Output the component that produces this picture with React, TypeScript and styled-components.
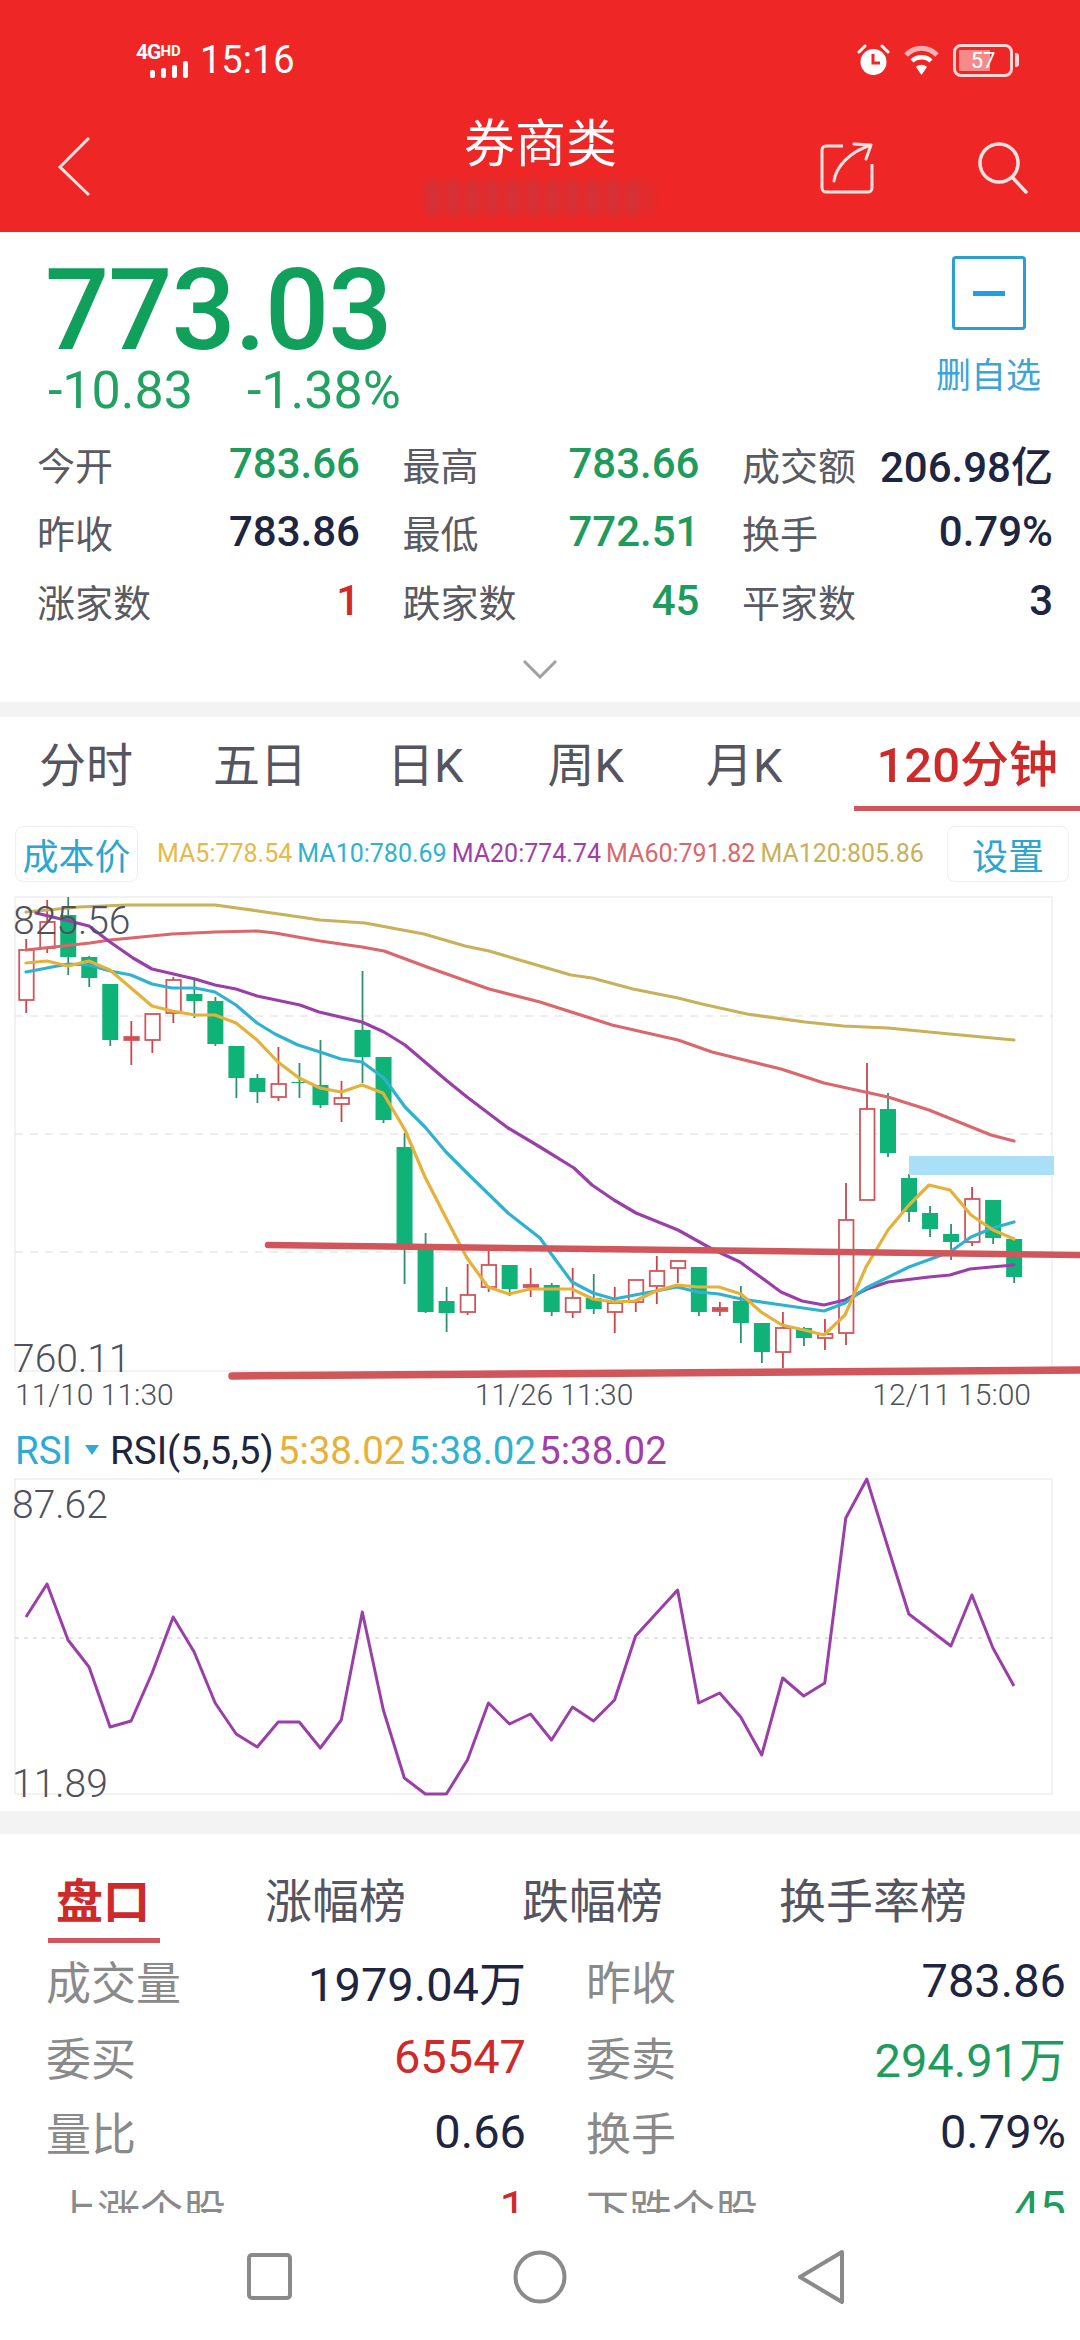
import React from 'react'
import styled, { createGlobalStyle } from 'styled-components'

const FONT = `Roboto, "Noto Sans CJK SC", sans-serif`
const RED = '#cf2a2a'
const GREEN = '#1d9c5e'
const NAVY = '#1e2540'
const SCRIBBLE = '#d1565b'

const GlobalStyle = createGlobalStyle`
  html, body {
    margin: 0;
    padding: 0;
    background: #fff;
  }
  * {
    box-sizing: border-box;
  }
`

const Page = styled.div`
  width: 1080px;
  height: 2340px;
  overflow: hidden;
  background: #fff;
  font-family: ${FONT};
  display: flex;
  flex-direction: column;
`

const Header = styled.header`
  position: relative;
  height: 232px;
  flex: none;
  background: #ee2626;
  color: #fff;
`

const StatusBar = styled.div`
  height: 34px;
  padding: 0 61px 0 136px;
  position: relative;
  top: 43px;
  display: flex;
  align-items: center;
`

const SignalBlock = styled.div`
  width: 60px;
  display: flex;
  flex-direction: column;
  align-items: flex-start;
  gap: 1px;

  svg {
    margin-left: 14px;
  }
`

const NetworkType = styled.span`
  font-size: 21px;
  line-height: 16px;
  font-weight: 700;
  letter-spacing: -1px;
  white-space: nowrap;

  small {
    font-size: 15px;
    vertical-align: 3px;
    letter-spacing: 0;
  }
`

const Clock = styled.span`
  font-size: 38px;
  line-height: 34px;
  margin-left: 4px;
`

const StatusIcons = styled.div`
  margin-left: auto;
  display: flex;
  align-items: center;
  gap: 14px;
`

const Battery = styled.div`
  position: relative;
  width: 60px;
  height: 33px;
  border: 3px solid #f9d5d5;
  border-radius: 8px;
  overflow: hidden;
  font-size: 22px;
  line-height: 27px;
  text-align: center;
  color: #fff;

  &::before {
    content: '';
    position: absolute;
    left: 3px;
    top: 3px;
    bottom: 3px;
    width: 31px;
    background: #f58a8a;
  }

  span {
    position: relative;
  }
`

const BatteryCap = styled.i`
  width: 4px;
  height: 14px;
  margin-left: -12px;
  background: #f9d5d5;
  border-radius: 0 3px 3px 0;
`

const NavRow = styled.div`
  position: absolute;
  top: 120px;
  left: 0;
  right: 0;
  padding: 0 50px 0 58px;
  display: grid;
  grid-template-columns: 1fr auto 1fr;
`

const BackIcon = styled.svg`
  margin-top: 17px;
`

const Title = styled.h1`
  margin: 1px 0 0 -7px;
  font-size: 51px;
  line-height: 48px;
  font-weight: 400;
`

const NavActions = styled.div`
  margin-top: 22px;
  display: flex;
  justify-content: flex-end;
  gap: 104px;
`

const Smudge = styled.div`
  position: absolute;
  left: 427px;
  top: 180px;
  width: 224px;
  height: 35px;
  background: repeating-linear-gradient(90deg, #7d5a6c 0 11px, transparent 11px 20px);
  filter: blur(4px);
  opacity: 0.3;
`

const Quote = styled.section`
  position: relative;
  height: 470px;
  flex: none;
  padding-top: 23px;
`

const QuoteTop = styled.div`
  height: 174px;
  padding-left: 45px;
`

const Price = styled.div`
  font-size: 113px;
  line-height: 112px;
  font-weight: 500;
  color: #11a05c;
  letter-spacing: -1px;
`

const Changes = styled.div`
  margin-top: -1px;
  padding-left: 3px;
  display: flex;
  gap: 54px;
  font-size: 52px;
  line-height: 50px;
  color: #22a262;
`

const WatchToggle = styled.div`
  position: absolute;
  top: 24px;
  left: 937px;
  width: 103px;
  display: flex;
  flex-direction: column;
  align-items: center;
`

const MinusBox = styled.div`
  width: 74px;
  height: 74px;
  border: 3px solid #2a9fd0;
  border-radius: 4px;
  display: flex;
  align-items: center;
  justify-content: center;

  &::after {
    content: '';
    width: 32px;
    height: 5px;
    background: #1e9fe6;
  }
`

const WatchLabel = styled.span`
  margin-top: 27px;
  font-size: 35px;
  line-height: 40px;
  color: #3ea4d8;
  white-space: nowrap;
`

const StatGrid = styled.div`
  padding-left: 37px;
  display: grid;
  grid-template-columns: 323px 297px 311px;
  column-gap: 42.5px;
  grid-auto-rows: 68.5px;
`

const Stat = styled.div`
  display: flex;
  align-items: center;
  justify-content: space-between;
  white-space: nowrap;
`

const StatLabel = styled.span`
  font-size: 38px;
  color: #5a5a62;
`

const StatValue = styled.span<{ $color?: string }>`
  font-size: 42px;
  font-weight: 500;
  color: ${(p) => p.$color ?? NAVY};
`

const ExpandIcon = styled.svg`
  display: block;
  margin: 24px auto 0;
`

const Band = styled.div<{ $h: number; $mt?: number }>`
  height: ${(p) => p.$h}px;
  margin-top: ${(p) => p.$mt ?? 0}px;
  flex: none;
  background: #f3f3f3;
`

const PeriodTabs = styled.nav`
  height: 90px;
  flex: none;
  display: flex;
  align-items: center;
  padding-top: 8px;
`

const PeriodTab = styled.span<{ $ml: number; $active?: boolean }>`
  position: relative;
  margin-left: ${(p) => p.$ml}px;
  font-size: ${(p) => (p.$active ? 49 : 47)}px;
  line-height: 54px;
  white-space: nowrap;
  color: ${(p) => (p.$active ? RED : '#555561')};
  font-weight: ${(p) => (p.$active ? 500 : 400)};

  ${(p) =>
    p.$active &&
    `
    &::after {
      content: '';
      position: absolute;
      left: -23px;
      right: -30px;
      bottom: -18px;
      height: 5px;
      background: ${SCRIBBLE};
    }
  `}
`

const MaRow = styled.div`
  height: 56px;
  flex: none;
  margin-top: 19px;
  padding: 0 11px 0 15px;
  display: flex;
  align-items: center;
`

const GhostButton = styled.div<{ $w: number }>`
  width: ${(p) => p.$w}px;
  height: 56px;
  border: 1px solid #eeeeee;
  border-radius: 8px;
  display: flex;
  align-items: center;
  justify-content: center;
  font-size: 36px;
  color: #2da6cf;
  white-space: nowrap;
`

const MaList = styled.div`
  flex: 1;
  padding-left: 19px;
  display: flex;
  gap: 5px;
`

const MaValue = styled.span<{ $color: string }>`
  font-size: 25px;
  line-height: 30px;
  color: ${(p) => p.$color};
  white-space: nowrap;
`

const ChartWrap = styled.div<{ $h: number; $mt: number }>`
  position: relative;
  flex: none;
  width: 1080px;
  height: ${(p) => p.$h}px;
  margin-top: ${(p) => p.$mt}px;

  svg {
    display: block;
  }
`

const AxisLabel = styled.span<{ $left: number; $top: number }>`
  position: absolute;
  left: ${(p) => p.$left}px;
  top: ${(p) => p.$top}px;
  font-size: 39px;
  line-height: 38px;
  font-weight: 300;
  color: #4f515c;
`

const DateRow = styled.div`
  height: 30px;
  flex: none;
  padding-left: 15px;
  display: flex;
  align-items: center;
`

const DateLabel = styled.span<{ $ml?: number }>`
  margin-left: ${(p) => p.$ml ?? 0}px;
  font-size: 30px;
  line-height: 28px;
  font-weight: 300;
  color: #4f515c;
  white-space: nowrap;
`

const RsiHeader = styled.div`
  height: 44px;
  flex: none;
  margin-top: 18px;
  padding-left: 15px;
  display: flex;
  align-items: center;
  font-size: 38.5px;
  white-space: nowrap;
`

const IndicatorName = styled.span`
  color: #2fa9d6;
`

const Caret = styled.i`
  width: 0;
  height: 0;
  margin: 0 11px 0 13px;
  border-left: 7px solid transparent;
  border-right: 7px solid transparent;
  border-top: 10px solid #2fa9d6;
`

const RsiParams = styled.span`
  color: ${NAVY};
  margin-right: 4px;
`

const RsiValue = styled.span<{ $color: string }>`
  color: ${(p) => p.$color};
  margin-right: 3px;
`

const DetailTabs = styled.nav`
  height: 109px;
  flex: none;
  padding-top: 46px;
  display: flex;
  align-items: flex-start;
`

const DetailTab = styled.span<{ $ml: number; $active?: boolean }>`
  position: relative;
  margin-left: ${(p) => p.$ml}px;
  font-size: 47px;
  line-height: 44px;
  white-space: nowrap;
  color: ${(p) => (p.$active ? RED : '#555561')};
  font-weight: ${(p) => (p.$active ? 700 : 400)};

  ${(p) =>
    p.$active &&
    `
    &::after {
      content: '';
      position: absolute;
      left: -8px;
      right: -10px;
      top: 58px;
      height: 5px;
      background: ${SCRIBBLE};
    }
  `}
`

const DetailGrid = styled.div`
  height: 270px;
  flex: none;
  overflow: hidden;
  padding-left: 46px;
  display: grid;
  grid-template-columns: 480px 480px;
  column-gap: 60px;
  grid-auto-rows: 75.5px;
`

const DetailCell = styled.div<{ $indent?: boolean }>`
  display: flex;
  align-items: center;
  justify-content: space-between;
  padding-left: ${(p) => (p.$indent ? 8 : 0)}px;
  white-space: nowrap;
`

const DetailLabel = styled.span<{ $small?: boolean }>`
  font-size: ${(p) => (p.$small ? 43 : 45)}px;
  color: #8a8a8a;
`

const DetailValue = styled.span<{ $color?: string }>`
  font-size: 47px;
  color: ${(p) => p.$color ?? NAVY};
`

const NavBar = styled.div`
  flex: 1;
  padding-left: 246px;
  display: flex;
  align-items: center;
`

const NavIcon = styled.svg<{ $ml?: number }>`
  margin-left: ${(p) => p.$ml ?? 0}px;
  fill: none;
  stroke: #8a8a8a;
  stroke-width: 4;
  stroke-linejoin: round;
`

// [bodyTop, bodyBottom, wickTop, wickBottom, isUp]
type Candle = [number, number, number, number, 0 | 1]

const candles: Candle[] = [
  [950, 1000, 939, 1013, 1],
  [922, 948, 900, 953, 1],
  [915, 957, 897, 975, 0],
  [957, 978, 956, 987, 0],
  [984, 1040, 984, 1046, 0],
  [1037, 1040, 1021, 1065, 1],
  [1014, 1040, 1014, 1053, 1],
  [980, 1013, 977, 1023, 1],
  [994, 1001, 978, 1018, 0],
  [1001, 1044, 997, 1046, 0],
  [1046, 1078, 1046, 1098, 0],
  [1078, 1092, 1074, 1103, 0],
  [1084, 1097, 1047, 1101, 1],
  [1082, 1083, 1063, 1098, 0],
  [1085, 1105, 1040, 1108, 0],
  [1098, 1104, 1081, 1122, 1],
  [1030, 1057, 971, 1083, 0],
  [1057, 1120, 1057, 1123, 0],
  [1147, 1248, 1133, 1284, 0],
  [1250, 1312, 1233, 1313, 0],
  [1301, 1313, 1287, 1332, 0],
  [1295, 1312, 1264, 1315, 1],
  [1265, 1287, 1250, 1292, 1],
  [1265, 1289, 1265, 1296, 0],
  [1285, 1287, 1268, 1297, 1],
  [1285, 1312, 1283, 1316, 0],
  [1298, 1312, 1268, 1318, 1],
  [1298, 1309, 1274, 1314, 0],
  [1303, 1312, 1287, 1333, 1],
  [1280, 1302, 1280, 1312, 1],
  [1271, 1286, 1256, 1304, 1],
  [1261, 1268, 1261, 1283, 1],
  [1267, 1312, 1267, 1316, 0],
  [1308, 1311, 1302, 1316, 1],
  [1301, 1323, 1286, 1343, 0],
  [1323, 1352, 1323, 1363, 0],
  [1328, 1352, 1312, 1368, 1],
  [1328, 1338, 1327, 1346, 0],
  [1334, 1338, 1319, 1350, 1],
  [1220, 1333, 1183, 1345, 1],
  [1109, 1200, 1063, 1200, 1],
  [1109, 1153, 1093, 1157, 0],
  [1178, 1212, 1174, 1222, 0],
  [1213, 1229, 1206, 1237, 0],
  [1234, 1242, 1224, 1260, 0],
  [1199, 1242, 1187, 1246, 1],
  [1200, 1238, 1200, 1244, 0],
  [1239, 1277, 1239, 1283, 0],
]

const maLines = [
  {
    color: '#c9b05a',
    points:
      '26,912 79,907 127,905 215,905 258,911 286,915 320,920 365,923 424,934 465,946 489,951 540,966 571,975 592,978 633,989 678,998 702,1004 747,1014 805,1022 843,1026 888,1028 950,1034 1014,1040',
  },
  {
    color: '#d9676b',
    points:
      '26,950 90,943 110,940 131,938 172,934 215,932 257,931 275,933 320,941 362,947 384,951 427,967 489,989 540,1002 612,1025 678,1040 712,1052 781,1069 824,1083 888,1097 929,1110 991,1135 1014,1141',
  },
  {
    color: '#9b3fa8',
    points:
      '36,913 69,921 89,926 110,942 133,958 152,969 195,979 215,985 236,989 257,996 300,1005 319,1012 362,1022 384,1032 405,1045 425,1062 446,1080 467,1097 508,1128 540,1147 574,1168 592,1185 614,1200 636,1213 678,1230 712,1249 740,1262 781,1292 802,1301 824,1305 845,1300 867,1289 888,1282 929,1277 950,1275 970,1269 991,1267 1014,1265',
  },
  {
    color: '#2fb2d0',
    points:
      '26,972 47,968 68,964 89,965 110,971 131,975 152,984 172,988 195,988 215,992 236,1005 257,1023 275,1034 298,1045 320,1052 341,1059 362,1062 384,1078 405,1107 425,1127 446,1152 467,1173 508,1213 540,1238 552,1255 572,1282 593,1293 614,1299 635,1295 656,1291 677,1287 698,1292 719,1294 741,1299 782,1305 824,1311 845,1303 866,1288 909,1267 950,1252 971,1237 993,1228 1014,1222',
  },
  {
    color: '#e6b13a',
    points:
      '26,963 47,961 68,966 89,961 110,970 131,988 152,1006 172,1011 195,1015 215,1015 236,1023 257,1040 278,1062 299,1078 320,1088 341,1092 362,1085 383,1093 405,1130 425,1177 446,1218 467,1258 488,1287 509,1294 530,1289 552,1289 572,1289 593,1299 614,1302 635,1301 656,1291 677,1285 698,1287 719,1287 741,1294 761,1312 782,1325 804,1330 824,1335 845,1315 866,1267 888,1230 909,1205 929,1185 950,1190 971,1215 993,1230 1014,1239',
  },
]

const rsiValues = [
  1617, 1584, 1640, 1667, 1727, 1721, 1673, 1617, 1652, 1703, 1734, 1747, 1722, 1722, 1748, 1720, 1612, 1710, 1778,
  1794, 1794, 1760, 1703, 1724, 1714, 1740, 1707, 1721, 1700, 1636, 1613, 1590, 1703, 1693, 1717, 1755, 1678, 1696,
  1683, 1518, 1479, 1547, 1614, 1630, 1646, 1595, 1648, 1686,
]

const candleX = (i: number) => 26.2 + i * 21.02

const stats = [
  ['今开', '783.66', GREEN, '最高', '783.66', GREEN, '成交额', '206.98亿', NAVY],
  ['昨收', '783.86', NAVY, '最低', '772.51', GREEN, '换手', '0.79%', NAVY],
  ['涨家数', '1', RED, '跌家数', '45', GREEN, '平家数', '3', NAVY],
]

const periods: [string, number][] = [
  ['分时', 39],
  ['五日', 80],
  ['日K', 80],
  ['周K', 84],
  ['月K', 82],
]

const maValues: [string, string][] = [
  ['MA5:778.54', '#e6b94a'],
  ['MA10:780.69', '#2fb2d0'],
  ['MA20:774.74', '#a23ea8'],
  ['MA60:791.82', '#d9676b'],
  ['MA120:805.86', '#c9b05a'],
]

const detailRows: [string, string, string | undefined, string, string, string | undefined][] = [
  ['成交量', '1979.04万', undefined, '昨收', '783.86', undefined],
  ['委买', '65547', RED, '委卖', '294.91万', GREEN],
  ['量比', '0.66', undefined, '换手', '0.79%', undefined],
]

const CandleMark = ({ candle, index }: { candle: Candle; index: number }) => {
  const [top, bottom, wickTop, wickBottom, up] = candle
  const x = candleX(index)
  const h = bottom - top
  return (
    <g>
      <line
        x1={x}
        x2={x}
        y1={wickTop}
        y2={wickBottom}
        stroke={up ? '#c9474b' : '#2f8f70'}
        strokeWidth={1.8}
      />
      {up ? (
        <rect
          x={x - 7}
          y={top}
          width={14.5}
          height={h}
          fill={h < 4 ? '#d9474b' : '#fff'}
          stroke="#d1565b"
          strokeWidth={1.8}
        />
      ) : (
        <rect x={x - 8} y={top} width={16} height={h} fill="#0fb277" />
      )}
    </g>
  )
}

const KlineChart = () => (
  <svg width={1080} height={490} viewBox="0 890 1080 490">
    <rect x={15} y={897} width={1037} height={474} fill="#fff" stroke="#e6e6e6" strokeWidth={1} />
    {[1016, 1134, 1252].map((y) => (
      <line key={y} x1={15} x2={1052} y1={y} y2={y} stroke="#dcdcdc" strokeWidth={1} strokeDasharray="8 7" />
    ))}
    {candles.map((c, i) => (
      <CandleMark key={i} candle={c} index={i} />
    ))}
    {maLines.map((l) => (
      <polyline
        key={l.color}
        points={l.points}
        fill="none"
        stroke={l.color}
        strokeWidth={3.2}
        strokeLinejoin="round"
        strokeLinecap="round"
      />
    ))}
    <rect x={909} y={1156} width={145} height={19} fill="#a9dff7" />
    <line x1={268} y1={1245} x2={1084} y2={1255} stroke={SCRIBBLE} strokeWidth={6.5} strokeLinecap="round" />
    <line x1={232} y1={1376} x2={1084} y2={1370} stroke={SCRIBBLE} strokeWidth={7.5} strokeLinecap="round" />
  </svg>
)

const RsiChart = () => (
  <svg width={1080} height={325} viewBox="0 1475 1080 325">
    <rect x={15} y={1479} width={1037} height={315} fill="#fff" stroke="#e6e6e6" strokeWidth={1} />
    <line x1={15} x2={1052} y1={1638} y2={1638} stroke="#dcdcdc" strokeWidth={1.5} strokeDasharray="4 5" />
    <polyline
      points={rsiValues.map((y, i) => `${26 + i * 21.02},${y}`).join(' ')}
      fill="none"
      stroke="#9b3fa8"
      strokeWidth={3}
      strokeLinejoin="round"
    />
  </svg>
)

const AlarmIcon = () => (
  <svg width={33} height={32} viewBox="0 0 33 32">
    <path d="M2 8 L8 2 M31 8 L25 2" stroke="#fff" strokeWidth={3} strokeLinecap="round" />
    <circle cx={16.5} cy={18} r={13} fill="#fff" />
    <path d="M16 10 V19 H23" fill="none" stroke="#ee2626" strokeWidth={3} />
  </svg>
)

const WifiIcon = () => (
  <svg width={35} height={31} viewBox="0 0 35 31" fill="none" strokeLinecap="butt">
    <path d="M2 10 C11 1 24 1 33 10" stroke="#f9b0b0" strokeWidth={5} />
    <path d="M8 16 C13 11 22 11 27 16" stroke="#fff" strokeWidth={4.5} />
    <path d="M17.5 30 L12 22 C15 19 20 19 23 22 Z" fill="#fff" />
  </svg>
)

const SignalBars = () => (
  <svg width={38} height={17} viewBox="0 0 38 17" fill="#fff">
    <rect x={0} y={9} width={5} height={8} rx={2} />
    <rect x={11} y={7} width={5} height={10} rx={2} />
    <rect x={22} y={4} width={5} height={13} rx={2} />
    <rect x={33} y={0} width={5} height={17} rx={2} />
  </svg>
)

const ShareIcon = () => (
  <svg width={54} height={53} viewBox="-1 -1 54 53" fill="none" stroke="#fbe3e3" strokeWidth={3}>
    <path d="M22 3 H5 a4 4 0 0 0 -4 4 V45 a4 4 0 0 0 4 4 H47 a4 4 0 0 0 4 -4 V21" />
    <path d="M13 38 C15 24 28 9 50 2 M33 1 L50 2 L45 16" strokeLinecap="round" strokeLinejoin="round" />
  </svg>
)

const SearchIcon = () => (
  <svg width={52} height={52} viewBox="0 0 52 52" fill="none" stroke="#fbe3e3" strokeWidth={3.5}>
    <circle cx={21} cy={21} r={19} />
    <path d="M34 35 L48 50" strokeLinecap="round" />
  </svg>
)

const App = () => (
  <Page>
    <GlobalStyle />
    <Header>
      <StatusBar>
        <SignalBlock>
          <NetworkType>
            4G<small>HD</small>
          </NetworkType>
          <SignalBars />
        </SignalBlock>
        <Clock>15:16</Clock>
        <StatusIcons>
          <AlarmIcon />
          <WifiIcon />
          <Battery>
            <span>57</span>
          </Battery>
          <BatteryCap />
        </StatusIcons>
      </StatusBar>
      <NavRow>
        <BackIcon width={32} height={60} viewBox="0 0 32 60" fill="none" stroke="#fbe3e3" strokeWidth={3}>
          <path d="M31 1 L2 30 L31 58" />
        </BackIcon>
        <Title>券商类</Title>
        <NavActions>
          <ShareIcon />
          <SearchIcon />
        </NavActions>
      </NavRow>
      <Smudge />
    </Header>

    <Quote>
      <QuoteTop>
        <Price>773.03</Price>
        <Changes>
          <span>-10.83</span>
          <span>-1.38%</span>
        </Changes>
      </QuoteTop>
      <WatchToggle>
        <MinusBox />
        <WatchLabel>删自选</WatchLabel>
      </WatchToggle>
      <StatGrid>
        {stats.flatMap((row) =>
          [0, 3, 6].map((i) => (
            <Stat key={row[i] as string}>
              <StatLabel>{row[i]}</StatLabel>
              <StatValue $color={row[i + 2]}>{row[i + 1]}</StatValue>
            </Stat>
          )),
        )}
      </StatGrid>
      <ExpandIcon width={36} height={20} viewBox="0 0 36 20" fill="none" stroke="#a0a0a0" strokeWidth={3}>
        <path d="M2 2 L18 18 L34 2" />
      </ExpandIcon>
    </Quote>

    <Band $h={15} />

    <PeriodTabs>
      {periods.map(([label, ml]) => (
        <PeriodTab key={label} $ml={ml}>
          {label}
        </PeriodTab>
      ))}
      <PeriodTab $ml={94} $active>
        120分钟
      </PeriodTab>
    </PeriodTabs>

    <MaRow>
      <GhostButton $w={123}>成本价</GhostButton>
      <MaList>
        {maValues.map(([text, color]) => (
          <MaValue key={text} $color={color}>
            {text}
          </MaValue>
        ))}
      </MaList>
      <GhostButton $w={122}>设置</GhostButton>
    </MaRow>

    <ChartWrap $h={490} $mt={8}>
      <KlineChart />
      <AxisLabel $left={13} $top={12}>
        825.56
      </AxisLabel>
      <AxisLabel $left={13} $top={450}>
        760.11
      </AxisLabel>
    </ChartWrap>

    <DateRow>
      <DateLabel>11/10 11:30</DateLabel>
      <DateLabel $ml={301}>11/26 11:30</DateLabel>
      <DateLabel $ml={239}>12/11 15:00</DateLabel>
    </DateRow>

    <RsiHeader>
      <IndicatorName>RSI</IndicatorName>
      <Caret />
      <RsiParams>RSI(5,5,5)</RsiParams>
      <RsiValue $color="#e6b13a">5:38.02</RsiValue>
      <RsiValue $color="#2fb2d0">5:38.02</RsiValue>
      <RsiValue $color="#a23ea8">5:38.02</RsiValue>
    </RsiHeader>

    <ChartWrap $h={325} $mt={3}>
      <RsiChart />
      <AxisLabel $left={12} $top={11}>
        87.62
      </AxisLabel>
      <AxisLabel $left={12} $top={290}>
        11.89
      </AxisLabel>
    </ChartWrap>

    <Band $h={23} $mt={11} />

    <DetailTabs>
      <DetailTab $ml={56} $active>
        盘口
      </DetailTab>
      <DetailTab $ml={115}>涨幅榜</DetailTab>
      <DetailTab $ml={116}>跌幅榜</DetailTab>
      <DetailTab $ml={116}>换手率榜</DetailTab>
    </DetailTabs>

    <DetailGrid>
      {detailRows.flatMap(([l1, v1, c1, l2, v2, c2]) => [
        <DetailCell key={l1}>
          <DetailLabel>{l1}</DetailLabel>
          <DetailValue $color={c1}>{v1}</DetailValue>
        </DetailCell>,
        <DetailCell key={l2}>
          <DetailLabel>{l2}</DetailLabel>
          <DetailValue $color={c2}>{v2}</DetailValue>
        </DetailCell>,
      ])}
      <DetailCell $indent>
        <DetailLabel $small>上涨个股</DetailLabel>
        <DetailValue $color={RED}>1</DetailValue>
      </DetailCell>
      <DetailCell>
        <DetailLabel $small>下跌个股</DetailLabel>
        <DetailValue $color={GREEN}>45</DetailValue>
      </DetailCell>
    </DetailGrid>

    <NavBar>
      <NavIcon width={47} height={49} viewBox="0 0 47 49">
        <rect x={3} y={3} width={41} height={43} rx={3} />
      </NavIcon>
      <NavIcon $ml={220} width={54} height={54} viewBox="0 0 54 54">
        <circle cx={27} cy={27} r={24.5} />
      </NavIcon>
      <NavIcon $ml={231} width={46} height={54} viewBox="0 0 46 54">
        <path d="M44 2 L2 27 L44 52 Z" />
      </NavIcon>
    </NavBar>
  </Page>
)

export default App
